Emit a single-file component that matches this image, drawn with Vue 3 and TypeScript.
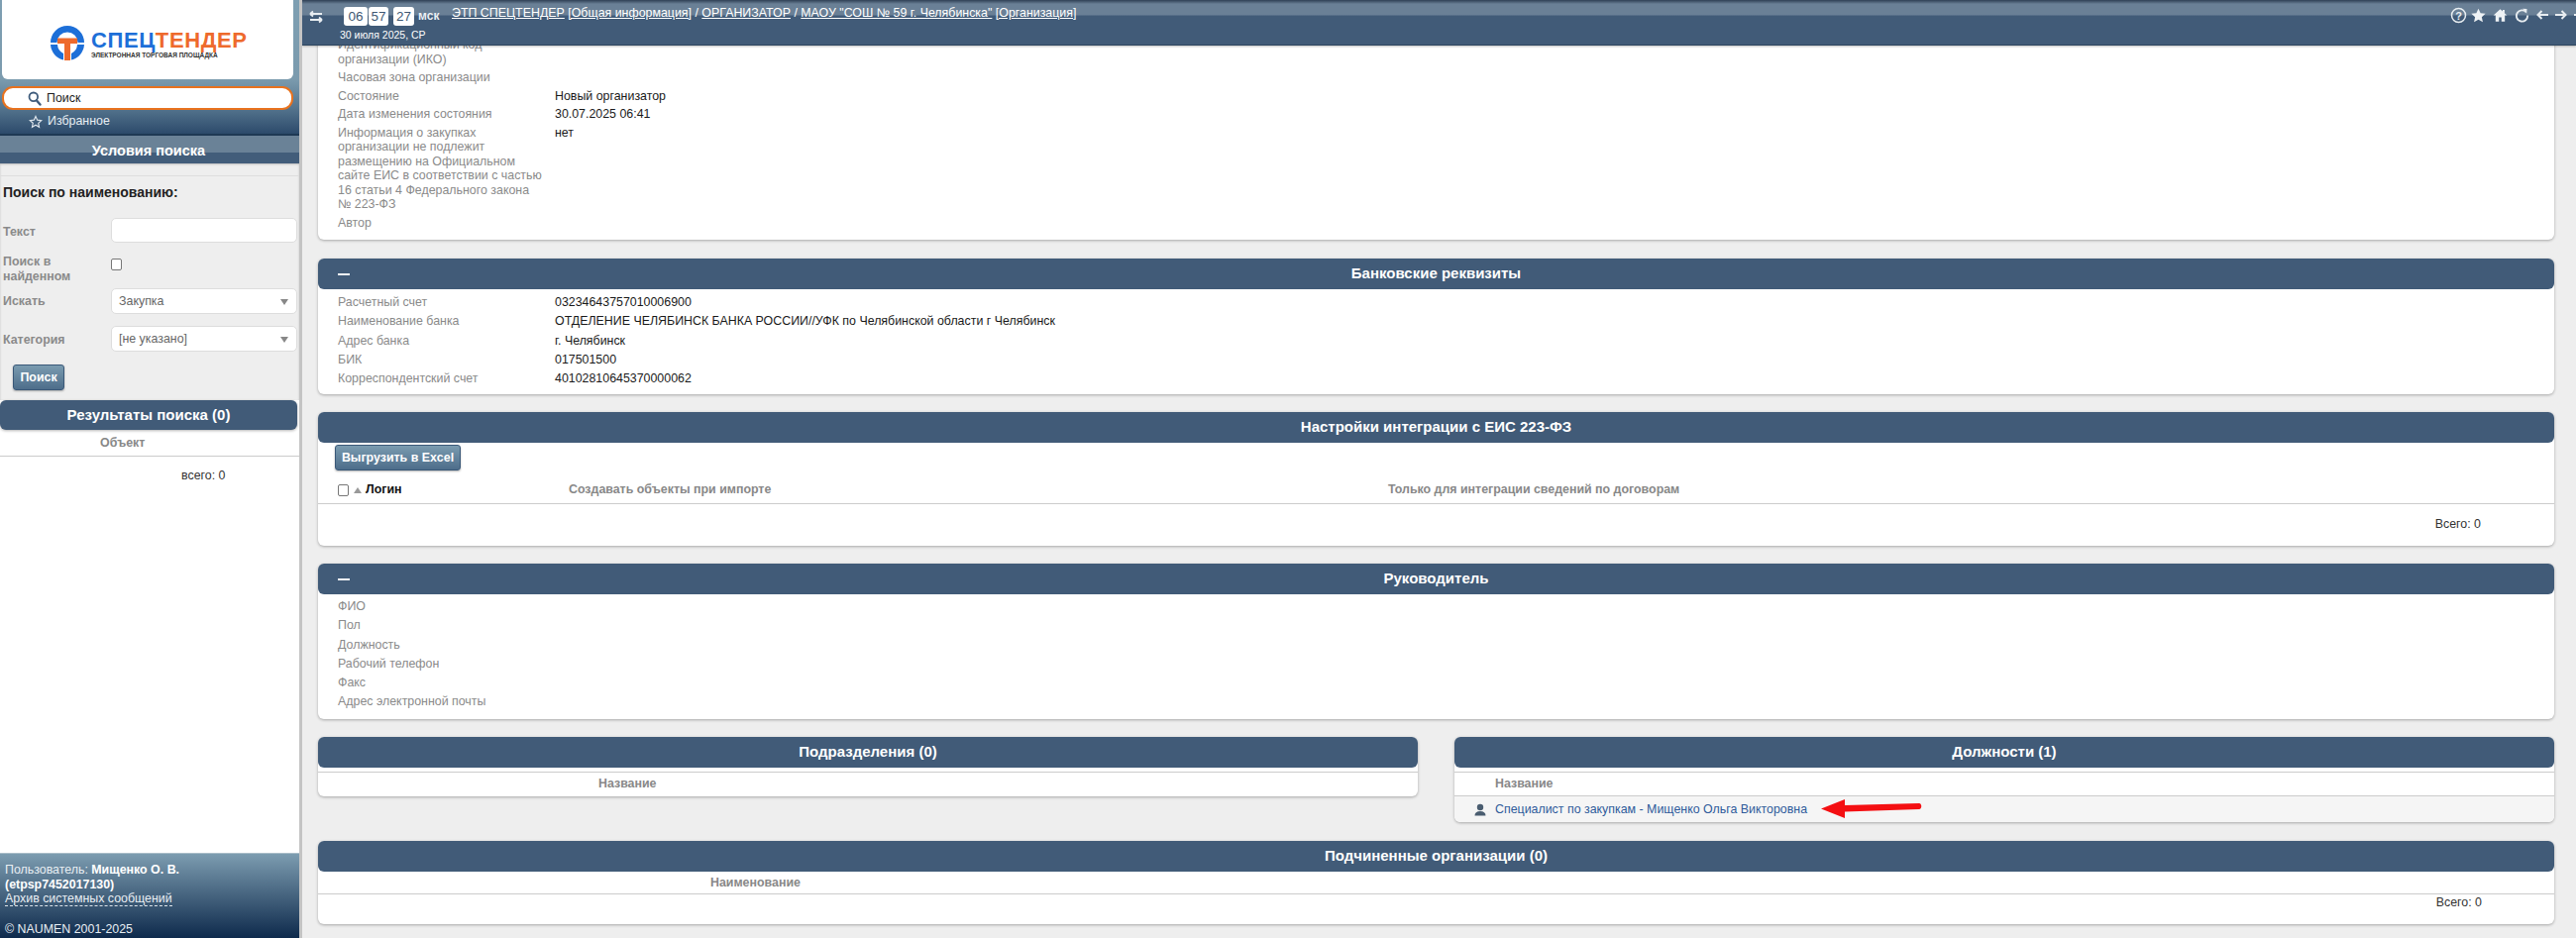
<script setup lang="ts">
const topRows = [
  { l: 'Идентификационный код организации (ИКО)', v: '' },
  { l: 'Часовая зона организации', v: '' },
  { l: 'Состояние', v: 'Новый организатор' },
  { l: 'Дата изменения состояния', v: '30.07.2025 06:41' },
  { l: 'Информация о закупках организации не подлежит размещению на Официальном сайте ЕИС в соответствии с частью 16 статьи 4 Федерального закона №\u00a0223-ФЗ', v: 'нет' },
  { l: 'Автор', v: '' },
]
const bankRows = [
  { l: 'Расчетный счет', v: '03234643757010006900' },
  { l: 'Наименование банка', v: 'ОТДЕЛЕНИЕ ЧЕЛЯБИНСК БАНКА РОССИИ//УФК по Челябинской области г Челябинск' },
  { l: 'Адрес банка', v: 'г. Челябинск' },
  { l: 'БИК', v: '017501500' },
  { l: 'Корреспондентский счет', v: '40102810645370000062' },
]
const headRows = ['ФИО', 'Пол', 'Должность', 'Рабочий телефон', 'Факс', 'Адрес электронной почты']
</script>

<template>
  <div class="page">
    <aside class="side">
      <div class="side-top">
        <div class="logo">
          <svg class="logo-mark" width="34" height="36" viewBox="0 0 34 36">
            <path d="M17 1a17 17 0 0 1 17 17h-6.500A10.500 10.500 0 0 0 6.500 18H0A17 17 0 0 1 17 1z" fill="#1d6fd8" />
            <path d="M0 20h7a10.500 10.500 0 0 0 6 9v6.500A17 17 0 0 1 0 20zM34 20h-7a10.500 10.500 0 0 1-6 9v6.500A17 17 0 0 0 34 20z" fill="#1d6fd8" />
            <path d="M7 13.500h20V19h-7v17h-6V19H7z" fill="#ee6a2c" />
          </svg>
          <div class="logo-text">
            <div class="logo-name"><span class="blue">СПЕЦ</span><span class="orange">ТЕНДЕР</span></div>
            <div class="logo-sub">ЭЛЕКТРОННАЯ ТОРГОВАЯ ПЛОЩАДКА</div>
          </div>
        </div>
        <div class="pill">
          <svg width="14" height="15" viewBox="0 0 14 15">
            <circle cx="5.800" cy="5.800" r="4.300" fill="none" stroke="#3f5c7c" stroke-width="1.800" />
            <path d="M9 9.500l3.500 4" stroke="#3f5c7c" stroke-width="2.400" stroke-linecap="round" />
          </svg>
          <span>Поиск</span>
        </div>
        <div class="fav">
          <svg width="14" height="14" viewBox="0 0 24 24">
            <path d="M12 2.500l2.900 6.300 6.900.8-5.100 4.700 1.400 6.800L12 17.600 5.900 21l1.400-6.800L2.200 9.600l6.900-.8z" fill="none" stroke="#dfe6ec" stroke-width="2" />
          </svg>
          <span>Избранное</span>
        </div>
      </div>
      <div class="side-title">Условия поиска</div>
      <div class="form">
        <div class="form-title">Поиск по наименованию:</div>
        <div class="f-row r-text">
          <label>Текст</label>
          <div class="input"></div>
        </div>
        <div class="f-row r-check">
          <label>Поиск в найденном</label>
          <span class="chk"></span>
        </div>
        <div class="f-row r-sel">
          <label>Искать</label>
          <div class="input select">Закупка<i class="caret"></i></div>
        </div>
        <div class="f-row r-sel r-cat">
          <label>Категория</label>
          <div class="input select">[не указано]<i class="caret"></i></div>
        </div>
        <button class="btn btn-search" type="button">Поиск</button>
      </div>
      <div class="results">
        <div class="res-title">Результаты поиска (0)</div>
        <div class="res-head"><span>Объект</span></div>
        <div class="res-total">всего: 0</div>
      </div>
      <div class="side-foot">
        <div class="user">Пользователь: <b>Мищенко О. В.</b></div>
        <div class="user"><b>(etpsp7452017130)</b></div>
        <div><span class="archive">Архив системных сообщений</span></div>
        <div class="copy">© NAUMEN 2001-2025</div>
      </div>
    </aside>

    <main class="main">
      <header class="bar">
        <svg class="swap" width="14" height="14" viewBox="0 0 14 14">
          <path d="M1 4h12M1 4l3-2.500M1 4l3 2.500M13 10H1M13 10l-3-2.500M13 10l-3 2.500" fill="none" stroke="#e8edf1" stroke-width="1.800" />
        </svg>
        <div class="clock-wrap">
          <div class="clock">
            <span class="digit">06</span><span class="digit d2">57</span><span class="digit d3">27</span><span class="msk">мск</span>
          </div>
          <div class="date">30 июля 2025, СР</div>
        </div>
        <div class="crumbs">
          <a>ЭТП СПЕЦТЕНДЕР</a> <a class="thin">[Общая информация]</a> / <a>ОРГАНИЗАТОР</a> / <a>МАОУ "СОШ № 59 г. Челябинска"</a> <a class="thin">[Организация]</a>
        </div>
        <div class="tools">
          <svg width="17" height="17" viewBox="0 0 17 17">
            <circle cx="8.500" cy="8.500" r="7" fill="none" stroke="#e8edf1" stroke-width="1.500" />
            <text x="8.500" y="12.500" text-anchor="middle" font-size="11" font-weight="700" font-family="Liberation Sans" fill="#e8edf1">?</text>
          </svg>
          <svg width="15" height="15" viewBox="0 0 24 24">
            <path d="M12 1l3.400 7.400 8 .9-6 5.500 1.700 8L12 18.800 4.900 22.800l1.700-8-6-5.500 8-.9z" fill="#eef2f5" />
          </svg>
          <svg width="15" height="15" viewBox="0 0 24 24">
            <path d="M12 2L1 12h3.500v10H10v-7h4v7h5.500V12H23l-4-3.600V3h-3v2.700z" fill="#eef2f5" />
          </svg>
          <svg width="15" height="15" viewBox="0 0 24 24">
            <path d="M18.500 6.500A9 9 0 1 0 21 12" fill="none" stroke="#e8edf1" stroke-width="3" />
            <path d="M13 1l7 .5-.5 7.500z" fill="#e8edf1" />
          </svg>
          <svg class="arr" width="12" height="10" viewBox="0 0 12 10">
            <path d="M12 5H3M5.500 1L1.500 5l4 4" fill="none" stroke="#e8edf1" stroke-width="2" />
          </svg>
          <svg class="arr" width="12" height="10" viewBox="0 0 12 10">
            <path d="M0 5h9M6.500 1l4 4-4 4" fill="none" stroke="#e8edf1" stroke-width="2" />
          </svg>
          <svg class="arr" width="12" height="16" viewBox="0 0 12 16">
            <path d="M0 8h7M4.500 4.500l3.500 3.500-3.500 3.500M3 1h9M3 15h9" fill="none" stroke="#e8edf1" stroke-width="1.800" />
          </svg>
        </div>
      </header>

      <div class="content">
        <section class="card first">
          <div class="rows">
            <div v-for="r in topRows" :key="r.l" class="row"><div class="lbl">{{ r.l }}</div><div class="val">{{ r.v }}</div></div>
          </div>
        </section>

        <section class="card">
          <div class="head"><i class="minus"></i>Банковские реквизиты</div>
          <div class="rows rows-bank">
            <div v-for="r in bankRows" :key="r.l" class="row"><div class="lbl">{{ r.l }}</div><div class="val">{{ r.v }}</div></div>
          </div>
        </section>

        <section class="card">
          <div class="head">Настройки интеграции с ЕИС 223-ФЗ</div>
          <button class="btn btn-excel" type="button">Выгрузить в Excel</button>
          <div class="grid-head">
            <span class="chk small"></span><i class="tri"></i><span class="login">Логин</span>
            <span class="col2">Создавать объекты при импорте</span>
            <span class="col3">Только для интеграции сведений по договорам</span>
          </div>
          <div class="total total-a">Всего: 0</div>
        </section>

        <section class="card">
          <div class="head"><i class="minus"></i>Руководитель</div>
          <div class="rows rows-head">
            <div v-for="r in headRows" :key="r" class="row"><div class="lbl">{{ r }}</div></div>
          </div>
        </section>

        <div class="halves">
          <section class="card half">
            <div class="head">Подразделения (0)</div>
            <div class="th th-left"><span>Название</span></div>
          </section>
          <section class="card half">
            <div class="head">Должности (1)</div>
            <div class="th th-right"><span>Название</span></div>
            <div class="pos">
              <svg width="12" height="13" viewBox="0 0 12 13">
                <circle cx="6" cy="4" r="3.200" fill="#4a5d70" />
                <path d="M0.500 12.500c0-3 2-4.500 5.500-4.500s5.500 1.500 5.500 4.500z" fill="#4a5d70" />
              </svg>
              <a>Специалист по закупкам - Мищенко Ольга Викторовна</a>
              <svg class="red" width="102" height="20" viewBox="0 0 102 20">
                <path d="M0 10.500L24 1v6l75-2c3 0 3 6 0 6l-75 2.500V20z" fill="#f40f12" />
              </svg>
            </div>
          </section>
        </div>

        <section class="card last">
          <div class="head">Подчиненные организации (0)</div>
          <div class="th th-last"><span>Наименование</span></div>
          <div class="total total-b">Всего: 0</div>
        </section>
      </div>
    </main>
  </div>
</template>

<style>
html, body { margin: 0; padding: 0; overflow: hidden; }
</style>

<style scoped>
* { box-sizing: border-box; }
.page {
  width: 2600px; height: 947px; display: flex; overflow: hidden;
  font: 12.400px/15px "Liberation Sans", Arial, sans-serif; color: #1a1a1a; background: #eee;
}
.side {
  width: 305px; flex: none; height: 947px; display: flex; flex-direction: column;
  border-right: 3px solid #c4c4c4; background: #fff;
}
.side-top {
  flex: none; height: 137px; padding: 0 0 0 2px; border-bottom: 2px solid #1e3954;
  background: linear-gradient(#7e9fb2 0, #7b9bae 80px, #56768f 108px, #2c4a6b 135px);
}
.logo {
  width: 294px; height: 80px; background: #fff; border-radius: 0 0 6px 6px;
  display: flex; padding: 25px 0 0 49px; gap: 7px;
}
.logo-mark { flex: none; }
.logo-name { font-size: 22px; line-height: 20px; font-weight: 700; letter-spacing: .6px; padding-top: 6px; white-space: nowrap; }
.blue { color: #1d6fd8; }
.orange { color: #ee6a2c; }
.logo-sub { font-size: 6.500px; line-height: 8px; margin-top: 1px; color: #333; font-weight: 700; white-space: nowrap; }
.pill {
  width: 294px; height: 24px; margin-top: 7px; border: 2.500px solid #e8721e; border-radius: 11px; background: #fff;
  display: flex; align-items: center; gap: 5px; padding-left: 24px; color: #222;
}
.fav { display: flex; align-items: center; gap: 5px; padding: 4px 0 0 27px; color: #e8eef3; }
.side-title {
  flex: none; height: 28px; color: #fff; font-size: 14.500px; font-weight: 700; line-height: 30px; text-align: center;
  background: linear-gradient(#6a8297 0, #6a8297 17px, #425d7a 17px, #425d7a 100%);
  padding-right: 2px;
}
.form { flex: none; background: #eee; height: 239px; padding: 12px 0 0 3px; box-shadow: inset 0 1px 2px #bbb; }
.form-title { border-top: 1px solid #ddd; padding-top: 8px; margin-left: -3px; padding-left: 3px; font-size: 14px; line-height: 17px; font-weight: 700; color: #222; }
.f-row { display: flex; }
.f-row label { width: 109px; flex: none; font-weight: 700; color: #8a8a8a; }
.r-text { margin-top: 17px; align-items: center; height: 25px; }
.r-text label { padding-top: 3px; }
.r-check { margin-top: 13px; height: 30px; }
.r-check label { width: 109px; padding-right: 30px; line-height: 14.500px; margin-top: -1px; }
.r-sel { margin-top: 3px; align-items: center; height: 26px; }
.r-sel.r-cat { margin-top: 12px; }
.r-cat label { padding-top: 3px; }
.input {
  width: 188px; height: 100%; background: #fff; border: 1px solid #ddd; border-radius: 5px;
}
.select { position: relative; padding-left: 7px; line-height: 24px; color: #666; }
.caret {
  position: absolute; right: 8px; top: 10px; border: 4px solid transparent; border-top: 6px solid #888; border-bottom: 0;
}
.chk {
  display: block; width: 11px; height: 12px; border: 1px solid #777; border-radius: 2px; background: #fff; margin-top: 3px;
}
.btn {
  display: block; padding: 0; border: 1px solid #3a5878; border-radius: 3px; color: #fff; font: 700 12.400px "Liberation Sans", Arial, sans-serif;
  background: linear-gradient(#7a9bb0, #4d6d8a); box-shadow: 0 1px 2px rgba(0,0,0,.3);
}
.btn-search { width: 52px; height: 26px; margin: 13px 0 0 10px; }
.results { flex: 1; min-height: 0; background: #fff; }
.res-title {
  width: 300px; height: 30px; background: #415b78; border-radius: 6px; color: #fff; text-align: center;
  font-size: 15px; font-weight: 700; line-height: 29px; box-shadow: 0 1px 3px rgba(0,0,0,.3);
}
.res-head { height: 27px; border-bottom: 1px solid #ccc; font-weight: 700; color: #888; padding: 6px 0 0 101px; }
.res-total { padding: 12px 0 0 183px; color: #333; }
.side-foot {
  flex: none; height: 86px; padding: 9px 5px 0; color: #e8eef3; border-top: 1px solid #a9bdc8;
  background: linear-gradient(#7c9cb0, #0e2a4c);
}
.user { width: 260px; line-height: 14.500px; }
.user b { color: #fff; }
.archive { border-bottom: 1px dashed #dfe6ec; line-height: 14px; display: inline-block; }
.copy { margin-top: 16px; }

.main { flex: 1; min-width: 0; height: 947px; overflow: hidden; display: flex; flex-direction: column; }
.bar {
  flex: none; height: 46px; display: flex; color: #fff; position: relative; z-index: 2;
  background: linear-gradient(#2f4055 0, #6a8096 4px, #6a8096 15px, #415b78 16px, #415b78 100%);
  border-bottom: 1px solid #2f4760; box-shadow: 0 1px 2px rgba(0,0,0,.25);
}
.swap { margin: 10px 0 0 7px; flex: none; }
.clock-wrap { margin-left: 20px; width: 110px; flex: none; }
.clock { display: flex; align-items: center; padding: 7px 0 0 1px; }
.digit {
  width: 24px; height: 19px; background: #fff; border-radius: 3px; color: #3e5873; text-align: center; font-size: 13.500px; line-height: 19px;
}
.d2 { width: 20px; margin-left: 1px; }
.d3 { width: 21px; margin-left: 5px; }
.msk { margin-left: 4px; font-size: 12px; font-weight: 700; color: #eaeff3; }
.date { font-size: 10.500px; line-height: 12px; margin: 3px 0 0 -3px; white-space: nowrap; color: #fff; }
.crumbs { flex: none; padding: 6px 0 0 0; font-size: 12.400px; white-space: nowrap; color: #fff; }
.crumbs a { text-decoration: underline; }
.tools { margin-left: auto; display: flex; align-items: center; height: 16px; margin-top: 7px; gap: 4px; width: 127px; flex: none; }
.tools svg { flex: none; }
.tools svg:nth-child(3) { margin-left: 3px; }
.tools svg:nth-child(4) { margin-left: 3px; }
.tools .arr { margin-left: 3px; }
.content { flex: 1; padding: 0 22px 0 16px; overflow: hidden; }
.card { background: #fff; border-radius: 6px; box-shadow: 0 1px 3px rgba(0,0,0,.3); margin-bottom: 18px; }
.first { height: 206px; margin-top: -10px; margin-bottom: 19px; overflow: hidden; }
.head {
  position: relative; height: 31px; background: #415b78; border-radius: 6px; color: #fff; text-align: center;
  font-size: 15px; font-weight: 700; line-height: 30px;
}
.minus { position: absolute; left: 20px; top: 15px; width: 12px; height: 2px; background: #f2f4f6; }
.rows { padding: 0 20px; }
.row { display: flex; padding: 2.200px 0; }
.first .rows { padding-top: 0; }
.first .row { padding: 2px 0; }
.lbl { width: 219px; padding-right: 8px; flex: none; color: #8a8a8a; line-height: 14.500px; }
.val { color: #1a1a1a; line-height: 14.500px; }
.rows-bank { padding-top: 4px; height: 106px; }
.rows-bank .row { height: 19.300px; }
.rows-head { padding-top: 3px; height: 126px; }
.rows-head .row { height: 19.200px; }
.btn-excel { width: 127px; height: 26px; margin: 2px 0 0 17px; }
.grid-head {
  position: relative; height: 34px; border-bottom: 1px solid #ccc; font-weight: 700; color: #888; line-height: 39px;
}
.grid-head > * { position: absolute; }
.chk.small { left: 20px; top: 14px; margin: 0; }
.tri { left: 36px; top: 17px; border: 4px solid transparent; border-bottom: 6px solid #999; border-top: 0; }
.login { left: 48px; color: #111; }
.col2 { left: 253px; }
.col3 { left: 1080px; }
.total { text-align: right; color: #333; }
.total-a { height: 42px; padding: 13px 74px 0 0; }
.halves { display: flex; justify-content: space-between; }
.half { width: 1110px; margin-bottom: 0; }
.half:first-child { height: 60px; }
.half:last-child { height: 86px; margin-bottom: 19px; }
.th { font-weight: 700; color: #888; border-top: 1px solid #ccc; margin-top: 4px; height: 25px; padding-top: 2px; line-height: 18px; }
.th-left span { margin-left: 283px; }
.th-right { border-bottom: 1px solid #ccc; }
.th-right span { margin-left: 41px; }
.pos { position: relative; height: 26px; background: #f5f5f5; display: flex; align-items: center; gap: 9px; padding-left: 20px; border-radius: 0 0 6px 6px; }
.pos a { color: #2f5b9b; }
.red { position: absolute; left: 370px; top: 2px; }
.last { height: 84px; margin-bottom: 0; }
.th-last { border-top: 0; border-bottom: 1px solid #ccc; margin-top: 0; height: 23px; padding-top: 3px; line-height: 17px; }
.th-last span { margin-left: 396px; }
.total-b { padding: 1px 73px 0 0; }
</style>
